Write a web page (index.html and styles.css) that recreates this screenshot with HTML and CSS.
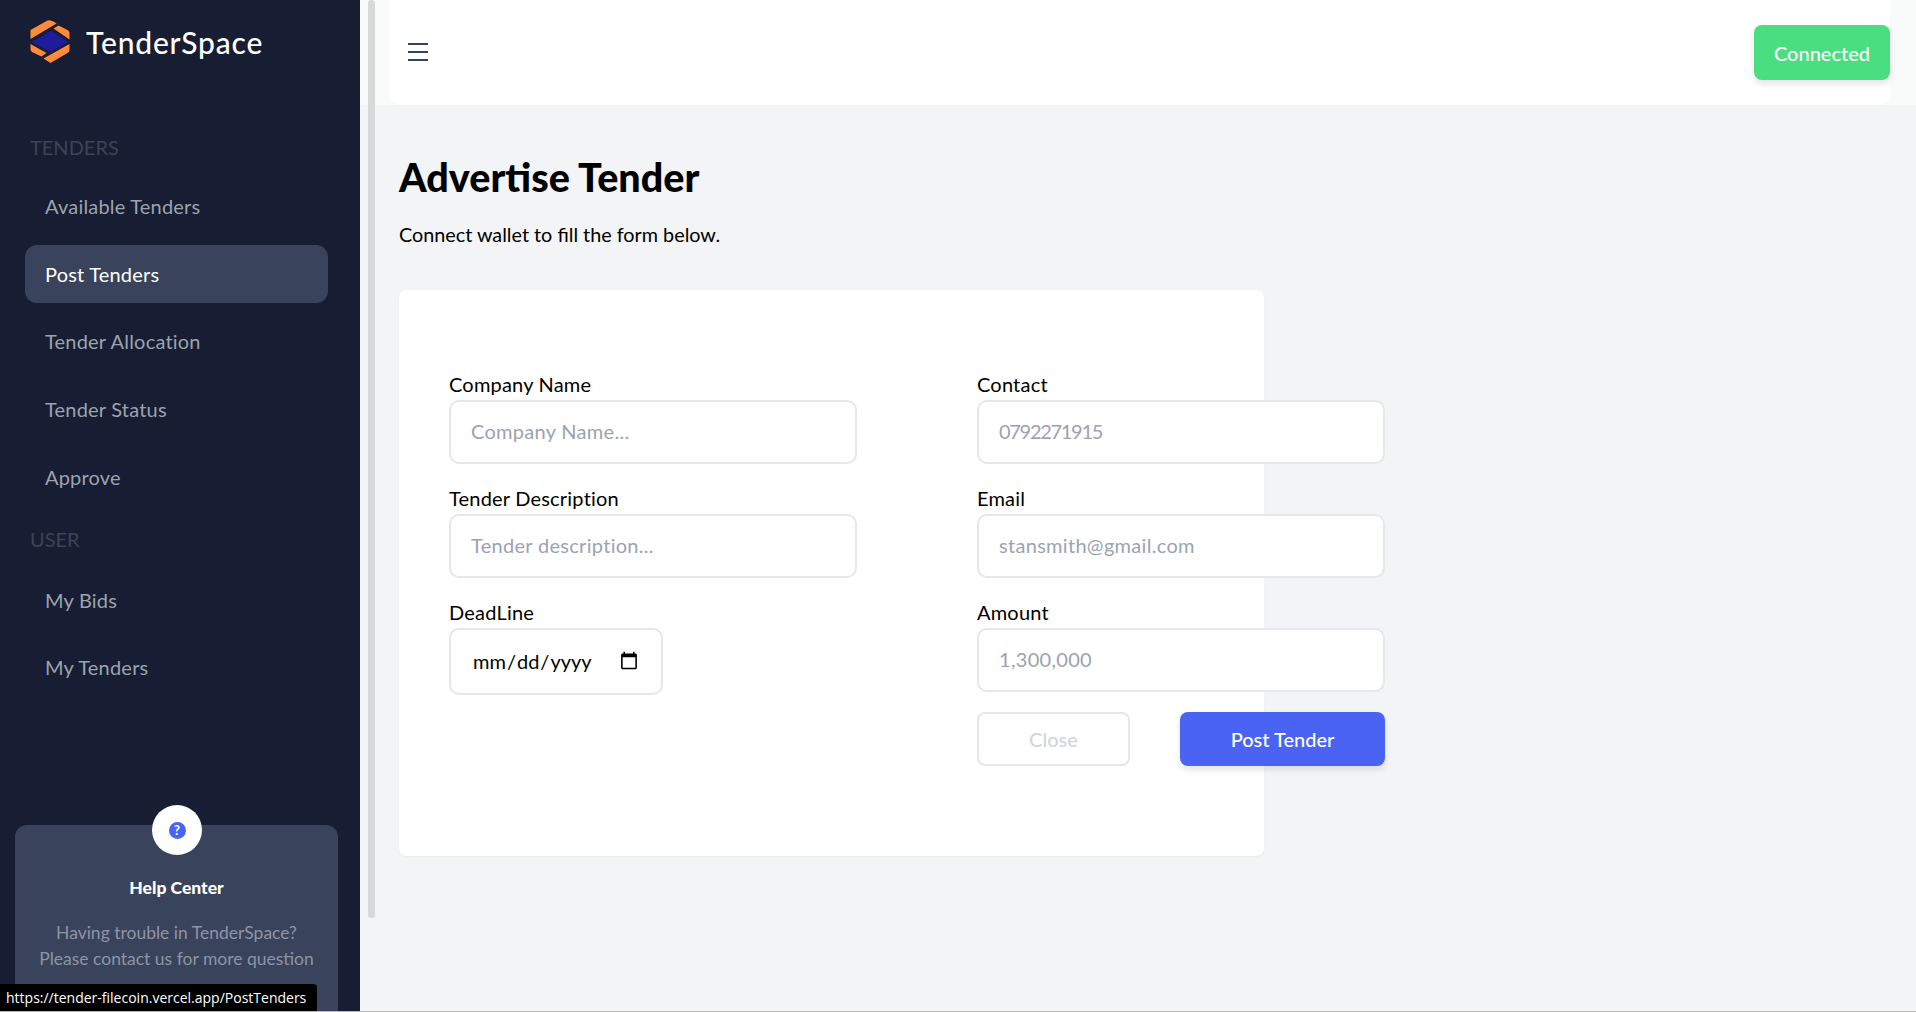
FILE: index.html
```html
<!DOCTYPE html>
<html lang="en">
<head>
    <meta charset="UTF-8">
    <title>TenderSpace</title>
    <link rel="stylesheet" href="styles.css">
</head>
<body>
    <aside class="sidebar">
        <div class="brand">
            <svg class="brand-logo" width="40" height="44" viewBox="30 20 39 44">
                <path fill="#1f1c9c" d="M31 42 50 31 68 42 50 52Z"/>
                <path fill="#ff8a3a" d="M30 30 47 20.5Q50 19.5 56 23.5L30 39Z"/>
                <path fill="#ff8a3a" d="M53 28.5 58 25.5 67 30Q69 31 69 33V39.5Z"/>
                <path fill="#ff8a3a" d="M30 44 46 53 41 56.5 31.5 52Q30 51 30 49Z"/>
                <path fill="#ff8a3a" d="M69 44V50Q69 52 67 53L50 63 43 58.5Z"/>
            </svg>
            <span class="brand-name">TenderSpace</span>
        </div>

        <nav class="nav">
            <div class="nav-title nav-title-first">TENDERS</div>
            <a class="nav-item">Available Tenders</a>
            <a class="nav-item active">Post Tenders</a>
            <a class="nav-item">Tender Allocation</a>
            <a class="nav-item">Tender Status</a>
            <a class="nav-item">Approve</a>
            <div class="nav-title">USER</div>
            <a class="nav-item">My Bids</a>
            <a class="nav-item">My Tenders</a>
        </nav>

        <div class="help">
            <div class="help-badge">
                <span class="help-icon">?</span>
            </div>
            <div class="help-title">Help Center</div>
            <p class="help-text">Having trouble in TenderSpace?<br>Please contact us for more question</p>
        </div>
    </aside>

    <main class="main">
        <div class="scroll-thumb"></div>
        <div class="topbar-band">
            <header class="topbar">
                <button class="menu-btn" type="button" aria-label="Menu">
                    <span></span><span></span><span></span>
                </button>
                <button class="connect-btn" type="button">Connected</button>
            </header>
        </div>

        <section class="content">
            <h1>Advertise Tender</h1>
            <p class="subtitle">Connect wallet to fill the form below.</p>

            <div class="card">
                <form class="form-grid">
                    <div class="field">
                        <label for="company">Company Name</label>
                        <input id="company" type="text" placeholder="Company Name...">
                    </div>
                    <div class="field">
                        <label for="contact">Contact</label>
                        <input id="contact" class="phone-input" type="text" placeholder="0792271915">
                    </div>
                    <div class="field">
                        <label for="description">Tender Description</label>
                        <input id="description" type="text" placeholder="Tender description...">
                    </div>
                    <div class="field">
                        <label for="email">Email</label>
                        <input id="email" type="text" placeholder="stansmith@gmail.com">
                    </div>
                    <div class="field">
                        <label for="deadline">DeadLine</label>
                        <input id="deadline" class="date-input" type="date">
                    </div>
                    <div class="field">
                        <label for="amount">Amount</label>
                        <input id="amount" type="text" placeholder="1,300,000">
                        <div class="actions">
                            <button class="btn-close" type="button">Close</button>
                            <button class="btn-post" type="button">Post Tender</button>
                        </div>
                    </div>
                </form>
            </div>
        </section>
    </main>

    <div class="status-link">https://tender-filecoin.vercel.app/PostTenders</div>
    <div class="window-edge"></div>
</body>
</html>
```

FILE: styles.css
```css
* {
    box-sizing: border-box;
}
html, body {
    height: 100%;
}
body {
    margin: 0;
    display: flex;
    overflow: hidden;
    font-family: Lato, "Open Sans", sans-serif;
    background-color: #f3f4f6;
    color: #000;
}

/* sidebar */
.sidebar {
    display: flex;
    flex-direction: column;
    width: 360px;
    height: 100vh;
    flex-shrink: 0;
    overflow: hidden;
    background-color: #171d32;
}
.brand {
    display: flex;
    align-items: center;
    gap: 16px;
    height: 44px;
    margin: 20px 0 0 30px;
}
.brand-name {
    font-size: 30px;
    font-weight: 500;
    letter-spacing: 0.8px;
    color: #fff;
}
.nav-title {
    height: 30px;
    margin: 18px 0 17px 30px;
    font-size: 20px;
    line-height: 30px;
    color: #3c4455;
}
.nav-title-first {
    margin-top: 68px;
    margin-bottom: 15px;
}
.nav-item {
    display: flex;
    align-items: center;
    width: 303px;
    height: 58px;
    margin: 0 0 9.7px 25px;
    padding-left: 20px;
    border-radius: 12px;
    font-size: 20px;
    letter-spacing: 0.2px;
    color: #9ca3af;
}
.nav-item.active {
    background-color: #3a435c;
    color: #fff;
}
.help {
    position: relative;
    flex-shrink: 0;
    width: 323px;
    height: 187px;
    margin: auto 0 0 15px;
    padding-top: 52px;
    border-radius: 12px 12px 0 0;
    background-color: #3a435c;
    text-align: center;
}
.help-badge {
    position: absolute;
    top: -20px;
    left: 137px;
    width: 50px;
    height: 50px;
    display: flex;
    align-items: center;
    justify-content: center;
    border-radius: 50%;
    background-color: #fff;
}
.help-icon {
    width: 17px;
    height: 17px;
    border-radius: 50%;
    background-color: #4a63f2;
    color: #fff;
    font-size: 13px;
    font-weight: 700;
    line-height: 17px;
}
.help-title {
    font-size: 17.5px;
    font-weight: 900;
    color: #fff;
}
.help-text {
    margin: 22px 0 0;
    font-size: 17.5px;
    line-height: 25.5px;
    color: #8d94a5;
}

/* main area */
.main {
    position: relative;
    flex: 1;
    min-width: 0;
}
.scroll-thumb {
    position: absolute;
    top: 0;
    left: 8px;
    width: 7px;
    height: 918px;
    border-radius: 4px;
    background-color: #d8d8d8;
}
.topbar-band {
    height: 105px;
    padding: 0 26px 0 30px;
    background-color: #f9fafa;
}
.topbar {
    display: flex;
    align-items: center;
    justify-content: space-between;
    height: 105px;
    padding-left: 18px;
    border-radius: 0 0 12px 12px;
    background-color: #fff;
}
.menu-btn {
    display: flex;
    flex-direction: column;
    gap: 6px;
    width: 20px;
    margin-bottom: 1px;
    padding: 0;
    border: none;
    background: none;
}
.menu-btn span {
    width: 20px;
    height: 2px;
    background-color: #3a435c;
}
.connect-btn {
    width: 136px;
    height: 55px;
    border: none;
    border-radius: 8px;
    background-color: #4ade80;
    color: #fff;
    font-family: inherit;
    font-size: 20px;
    font-weight: 500;
    box-shadow: 0 4px 6px rgba(0, 0, 0, 0.1);
}
.content {
    padding: 49px 0 0 39px;
}
h1 {
    margin: 0;
    font-size: 39.5px;
    font-weight: 900;
    line-height: 46px;
}
.subtitle {
    margin: 20px 0 0;
    font-size: 19.8px;
    line-height: 28px;
}
.card {
    width: 865px;
    height: 566px;
    margin-top: 42px;
    padding: 80px 0 0 50px;
    border-radius: 8px;
    background-color: #fff;
    box-shadow: 0 1px 2px rgba(0, 0, 0, 0.04);
}
.form-grid {
    display: grid;
    grid-template-columns: 408px 408px;
    column-gap: 120px;
    row-gap: 20px;
    width: 936px;
}
.field label {
    display: block;
    height: 30px;
    font-size: 20px;
    line-height: 28px;
    letter-spacing: 0.2px;
}
input {
    display: block;
    width: 100%;
    height: 64px;
    padding: 0 20px 2px;
    border: 2px solid #e5e7eb;
    border-radius: 10px;
    outline: none;
    background-color: #fff;
    font-family: inherit;
    font-size: 20px;
    letter-spacing: 0.3px;
    color: #000;
}
input::placeholder {
    color: #9ca3af;
}
.phone-input {
    letter-spacing: -1.3px;
}
.date-input {
    width: 214px;
    height: 67px;
    padding: 0 20px 2px 21px;
    letter-spacing: 0;
}
.actions {
    display: flex;
    justify-content: space-between;
    margin-top: 20px;
}
.actions button {
    height: 54px;
    border-radius: 8px;
    font-family: inherit;
    font-size: 20px;
    font-weight: 500;
}
.btn-close {
    width: 153px;
    border: 2px solid #e5e7eb;
    background-color: #fff;
    color: #d1d5db;
}
.btn-post {
    width: 205px;
    border: none;
    background-color: #4a63f2;
    color: #fff;
    box-shadow: 0 4px 6px rgba(0, 0, 0, 0.1);
}

/* browser link preview, sits over the help card */
.status-link {
    position: fixed;
    left: 0;
    bottom: 1px;
    width: 317px;
    height: 27px;
    padding-left: 6px;
    border-radius: 0 4px 0 0;
    background-color: #000;
    color: #fff;
    font-family: "Open Sans", sans-serif;
    font-size: 14px;
    line-height: 27px;
    white-space: nowrap;
}
.window-edge {
    position: fixed;
    left: 0;
    right: 0;
    bottom: 0;
    height: 1px;
    background-color: #b8b8b8;
}
```
